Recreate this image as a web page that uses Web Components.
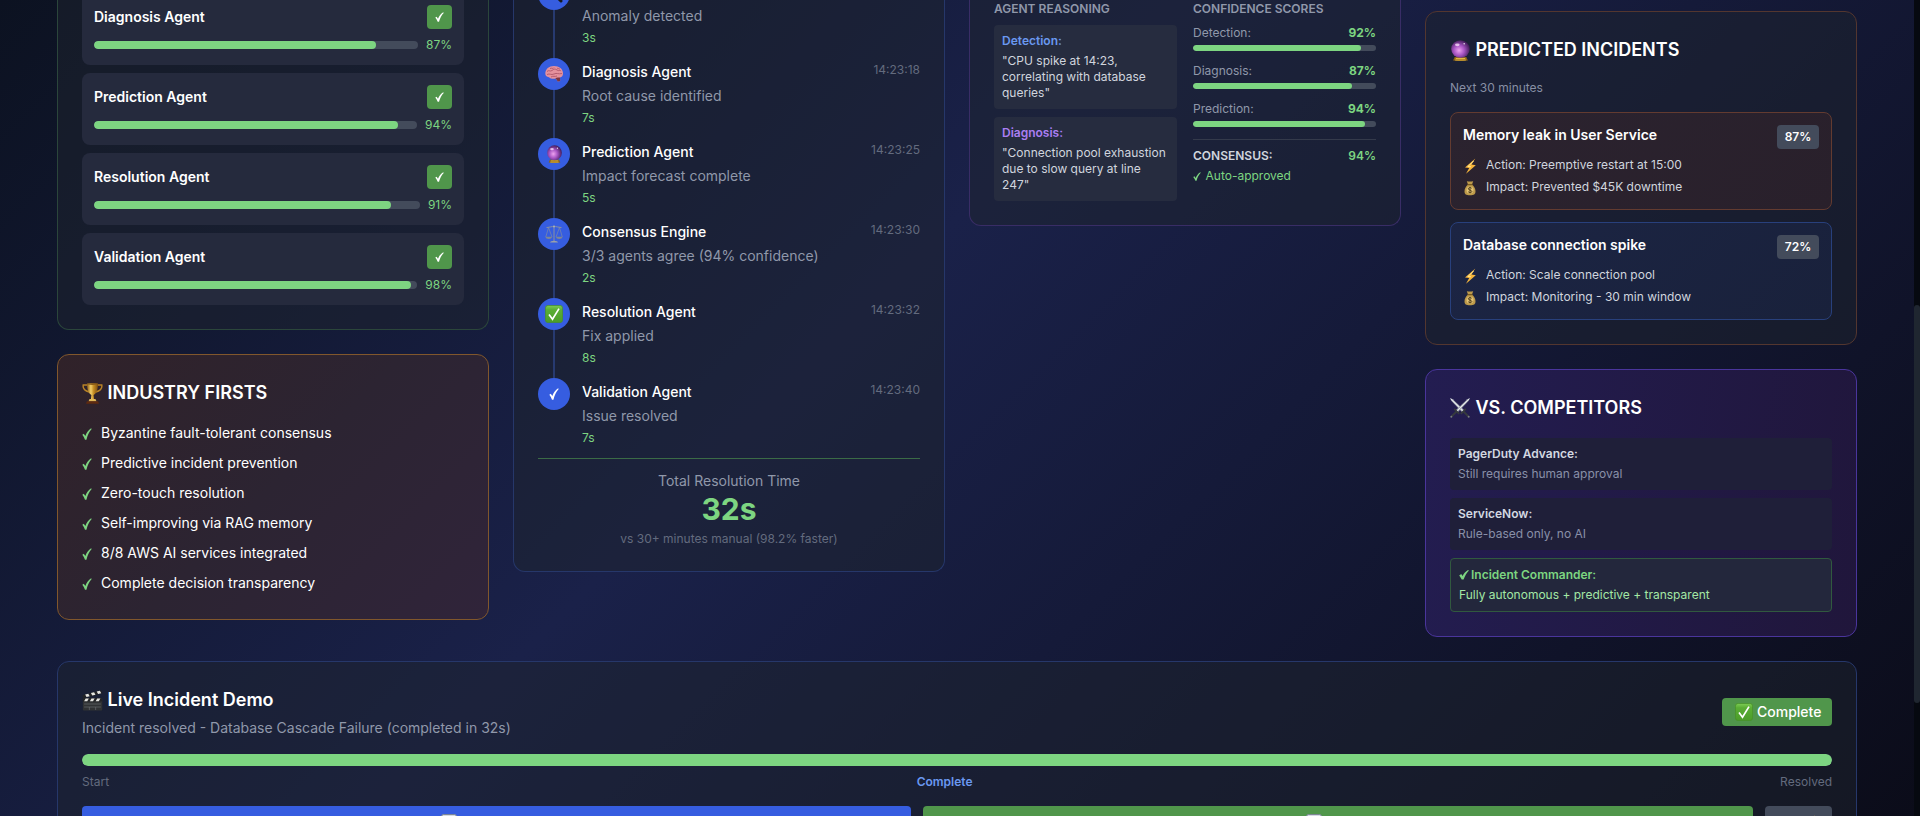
<!DOCTYPE html>
<html lang="en">
<head>
<meta charset="utf-8">
<title>Incident Commander</title>
<style>
html,body{margin:0;height:100%;overflow:hidden;background:#0a0b18}
body{font-family:Inter,"Liberation Sans",sans-serif;font-size:14px;line-height:20px;color:#fff}
</style>
</head>
<body>
<incident-dashboard></incident-dashboard>
<script>
const ICONS = {
  check: ['0 0 9 10', '<path fill="currentColor" d="M.3 5.6 1.6 4.7 3 6.7C4.2 3.8 5.8 1.6 8.2.2l.5.7C6.4 3.3 5 6 4 9.8H2.7C2.1 8.2 1.3 6.8.3 5.6Z"/>'],
  heavy: ['0 0 10 10', '<path fill="currentColor" d="M.2 5.4 2.2 4 3.6 6C5 3.4 6.600 1.500 9 .1l.9.5C7.500 3.200 6 5.900 4.600 9.600H2.700C2 8 1.200 6.500.2 5.400Z"/>'],
  trophy: ['0 0 21 21', '<defs><linearGradient id="g"><stop offset="0" stop-color="#8a5a12"/><stop offset=".35" stop-color="#f3cf6a"/><stop offset=".6" stop-color="#c48d24"/><stop offset="1" stop-color="#7c4c0e"/></linearGradient></defs><path d="M5.500 2H1.200c-.6 3.500 2.300 6 6 7M15.500 2h4.300c.6 3.500-2.300 6-6 7" fill="none" stroke="#b98326" stroke-width="1.400"/><path d="M5 .5h11c0 6-1.500 10-4.400 11.500l.5 4.500H8.900l.5-4.500C6.500 10.500 5 6.500 5 .5Z" fill="url(#g)"/><ellipse cx="10.500" cy="1.100" rx="5.500" ry=".8" fill="#8a5c17"/><path d="M7.500 16h6l1 2.500h-8z" fill="#e0b95a"/><path d="M5 18.300h11l1 2.400H4z" fill="#5e2a10"/>'],
  brain: ['0 0 18 18', '<path d="M.3 8.500C.3 4 4 1 9 1c5.200 0 9 3 9 7.400 0 2.400-1.200 3.600-3 4.100l.2 3.500-2.400.500-2-3C8 14.300 5.600 13.600 4 12.200 1.500 12 .3 10.600.3 8.500Z" fill="#e5919d"/><path d="M2 6.500c2-2 3 .500 5-1s3-2 5-.500 3-.500 4 1M2 9.500c3-1.500 4 1 7-.500s4 .5 8-.500M5 3.500c2-1 3 1 4-1M6 12c2-1.500 4 0 6-1M12 3c1 1 2 0 3 1.500" fill="none" stroke="#a94f63" stroke-width=".8"/><path d="M10.500 13c1.500-1 3-.5 4.500-.5l.2 3.500-2.400.5Z" fill="#7c3540"/>'],
  ball: ['0 0 18 21', '<defs><radialGradient id="b" cx=".42" cy=".58" r=".62"><stop offset="0" stop-color="#eda2f0"/><stop offset=".45" stop-color="#a855c4"/><stop offset="1" stop-color="#38184f"/></radialGradient></defs><path d="M3.500 17h11l1.500 3.500q-7 1.100-14 0Z" fill="#8d6316"/><path d="M4.500 18.500h9M4 20h10" stroke="#e6bd48" stroke-width=".9"/><circle cx="9" cy="9" r="8.800" fill="url(#b)"/><ellipse cx="6" cy="4.800" rx="2.200" ry="1.400" fill="#f5dcf7" opacity=".8"/><circle cx="12.500" cy="3.800" r=".8" fill="#fff" opacity=".8"/>'],
  scales: ['0 0 18 18', '<g fill="none" stroke="#8a929e" stroke-width="1"><path d="M1.500 2.600C5 2 7 1.800 9 1.200c2 .6 4 .8 7.500 1.400M9 1v15"/><path stroke-width=".6" d="M3.500 2.500.8 12M3.500 2.500 7 12M14.500 2.500 11 12M14.500 2.500 17.300 12"/></g><path d="M.3 11.700h7q-.6 2.300-3.500 2.300T.3 11.700ZM10.700 11.700h7q-.6 2.300-3.500 2.300t-3.500-2.300Z" fill="#7e8794"/><path d="M5 17.600q.5-1.800 4-1.800t4 1.800Z" fill="#9aa1aa"/><circle cx="9" cy="1.500" r="1" fill="#a9afb8"/>'],
  checkbox: ['0 0 18 18', '<defs><linearGradient id="k" x2="0" y2="1"><stop offset="0" stop-color="#7fce56"/><stop offset=".25" stop-color="#5aae35"/><stop offset="1" stop-color="#4b9c29"/></linearGradient></defs><rect x=".4" y=".4" width="17.200" height="17.200" rx="2.800" fill="url(#k)" stroke="#47902a" stroke-width=".8"/><path d="M4 9.500 7.500 14.200 14 3.600" fill="none" stroke="#fff" stroke-width="1.700"/>'],
  swords: ['0 0 20 20', '<g><path d="M.3.7.7.3 2.700 1.300 14.500 12.500 12.500 14.500 1.300 2.700Z" fill="#b9bec5"/><path d="M.7.700 13.500 13.500" stroke="#eef0f3" stroke-width=".8"/><path d="M15.800 10.800 10.800 15.800M13.500 13.500 18.500 18.500" stroke="#363a3e" stroke-width="1.800"/><circle cx="18.700" cy="18.700" r="1" fill="#777b7f"/></g><g transform="matrix(-1 0 0 1 20 0)"><path d="M.3.7.7.3 2.700 1.300 14.500 12.500 12.500 14.500 1.300 2.700Z" fill="#aab0b8"/><path d="M.7.700 13.500 13.500" stroke="#f5f6f8" stroke-width=".8"/><path d="M15.800 10.800 10.800 15.800M13.500 13.500 18.500 18.500" stroke="#363a3e" stroke-width="1.800"/><circle cx="18.700" cy="18.700" r="1" fill="#777b7f"/></g>'],
  clapper: ['0 0 20 21', '<rect x=".8" y="8" width="18.500" height="12.500" rx="1" fill="#303234"/><path d="M.8 8.300h18.500v3.200H.8zM.3 5.200 18.300.3l.9 3L1.200 8.200Z" fill="#232426"/><path d="m3 4.500 3-.8 1.300 2.600-3 .8ZM8.500 3l3-.8 1.300 2.600-3 .8ZM14 1.500l3-.8 1.300 2.600-3 .8ZM3.500 8.500h3l-1.500 2.700H2ZM9 8.500h3l-1.500 2.700h-3ZM14.500 8.500h3L16 11.200h-3Z" fill="#e6e6e2"/><path d="M2 14h16M2 17h16M7 17v3M13 17v3" stroke="#66696c" stroke-width=".7"/>'],
  bolt: ['0 0 14 18', '<path d="M12.300 1.500 2 10.500l4.200.4L3 16.800l9.800-8.600-4.300-.6Z" fill="#f6b53c"/><path d="M10.500 4 5 9.500l3 .3" fill="none" stroke="#ffe78f" stroke-width="1"/>'],
  bag: ['0 0 14 18', '<path d="M5 5.500 3.800 2.200Q7 3 10.200 2.200L9 5.500c2.200 2 3.500 4.300 3.500 6.700 0 3-1.500 4-5.500 4s-5.500-1-5.500-4C1.500 9.800 2.800 7.500 5 5.500Z" fill="#bd9a4a"/><path d="M4.300 5.700h5.400" stroke="#6b4e17" stroke-width="1"/><circle cx="7" cy="11" r="3.500" fill="#e1c273"/><path d="M8.700 9.300C8 8.300 5.300 8.300 5.300 9.800S8.800 11 8.800 12.500 6 13.800 5.200 12.700M7 7.800v6.500" fill="none" stroke="#473615" stroke-width=".9"/>'],
  lens: ['0 0 18 18', '<circle cx="7" cy="7" r="5.500" fill="#a8cbe0" stroke="#333" stroke-width="1.500"/><path d="m11 11 5 5" stroke="#17191c" stroke-width="3" stroke-linecap="round"/>'],
  screen: ['0 0 16 16', '<rect x=".5" y=".5" width="15" height="15" rx="2" fill="#d4d9e2" stroke="#7d8694"/>'],
};

function define(name, css, html) {
  customElements.define(name, class extends HTMLElement {
    connectedCallback() {
      if (this.shadowRoot) return;
      const a = k => this.getAttribute(k) || '';
      this.attachShadow({mode: 'open'}).innerHTML =
        '<style>*{box-sizing:border-box}' + css + '</style>' + html(a);
    }
  });
}

define('ui-icon', ':host{display:block;flex:none}svg{display:block;width:100%;height:100%}',
  a => { const [v, p] = ICONS[a('name')]; return `<svg viewBox="${v}" preserveAspectRatio="none">${p}</svg>`; });

define('ui-panel', `:host{display:block;box-sizing:border-box;border:1px solid var(--line);border-radius:12px;padding:24px;
  background:var(--fill,rgba(30,36,45,.5))}`, () => '<slot></slot>');

define('panel-title', `:host{display:flex;align-items:center;gap:4.500px;height:28px;font-size:18px;line-height:28px;font-weight:600;color:#fff}
  ui-icon{width:21px;height:21px}ui-icon[name=ball]{width:19px;margin:0 1px}ui-icon[name=swords]{width:20px;height:20px;margin-right:1px}`, a => `<ui-icon name="${a('icon')}"></ui-icon><slot></slot>`);

define('progress-bar', `:host{display:block;height:8px;border-radius:99px;background:#434b5b;overflow:hidden}
  i{display:block;height:100%;border-radius:99px;background:#7dd581}`, a => `<i style="width:${a('value')}%"></i>`);

define('agent-card', `:host{display:block;box-sizing:border-box;height:72px;padding:12px;border-radius:8px;background:#252a3d}
  div{display:flex;align-items:center}
  .top{height:24px;justify-content:space-between;font-weight:600}
  .badge{width:25px;height:24px;border-radius:4px;background:#50964b;justify-content:center}
  .badge ui-icon{width:9px;height:10px;margin-bottom:1px}
  .row{margin-top:8px;height:16px;gap:8px;font-size:12px;line-height:16px;color:#7dd581}
  progress-bar{flex:1}`,
  a => `<div class="top"><span>${a('name')}</span><div class="badge"><ui-icon name="check"></ui-icon></div></div>
  <div class="row"><progress-bar value="${a('value')}"></progress-bar><span>${a('value')}%</span></div>`);

define('check-item', `:host{display:flex;height:22px;gap:9px;line-height:20px;align-items:flex-start;color:#fff}
  ui-icon{width:10px;height:12px;margin-top:5px;color:#7dd581}`,
  () => '<ui-icon name="check"></ui-icon><span><slot></slot></span>');

define('timeline-step', `:host{display:flex;height:80px;gap:12px}
  :host([last]){height:68px}:host([last]) .rail::after{display:none}
  .rail{display:flex;flex-direction:column;align-items:center;width:32px}
  .rail::after{content:"";width:2px;flex:1;background:#273a70}
  .dot{width:32px;height:32px;border-radius:50%;background:#365de0;display:flex;align-items:center;justify-content:center}
  ui-icon{width:18px;height:18px}ui-icon[name=ball]{width:15px;height:18px}ui-icon[name=check]{width:10px;height:12px}
  .body{flex:1;padding-top:4px}
  .head{display:flex;justify-content:space-between;height:24px;font-weight:500}
  time,.dur{font-size:12px;line-height:16px;font-weight:400}
  time{color:#636b7e}.text{color:#9098aa;height:20px}.dur{color:#7dd581;margin-top:4px}`,
  a => `<div class="rail"><div class="dot"><ui-icon name="${a('icon')}"></ui-icon></div></div>
  <div class="body"><div class="head"><span>${a('name')}</span><time>${a('time')}</time></div>
  <div class="text">${a('text')}</div><div class="dur">${a('dur')}</div></div>`);

define('reason-note', `:host{display:block;height:84px;box-sizing:border-box;padding:8px;border-radius:4px;background:#262c3f;font-size:12px;line-height:16px;color:#d0d5de}
  b{display:block;font-weight:600;margin-bottom:4px;color:var(--c)}`,
  a => `<b>${a('label')}</b><slot></slot>`);

define('score-row', `:host{display:block;height:26px;margin-bottom:12px;font-size:12px;line-height:16px;color:#9098aa}
  div{display:flex;justify-content:space-between}b{font-weight:700;color:#7dd581}progress-bar{height:6px;margin-top:4px}`,
  a => `<div><span>${a('label')}</span><b>${a('value')}%</b></div><progress-bar value="${a('value')}"></progress-bar>`);

define('incident-card', `:host{display:block;box-sizing:border-box;height:98px;padding:12px;border:1px solid var(--line);border-radius:8px;background:var(--fill)}
  .top{display:flex;justify-content:space-between;height:24px;font-weight:600;margin-bottom:8px}
  .pct{width:42px;height:24px;line-height:24px;text-align:center;border-radius:4px;background:#434b5b;font-size:12px}
  .row{display:flex;gap:9px;height:18px;margin-bottom:4px;font-size:12px;line-height:16px;color:#d0d5de}
  ui-icon{width:14px;height:18px}`,
  a => `<div class="top"><span>${a('name')}</span><span class="pct">${a('value')}%</span></div>
  <div class="row"><ui-icon name="bolt"></ui-icon><span>Action: ${a('action')}</span></div>
  <div class="row"><ui-icon name="bag"></ui-icon><span>Impact: ${a('impact')}</span></div>`);

define('rival-card', `:host{display:block;box-sizing:border-box;padding:8px;border-radius:4px;background:#1f1f39;font-size:12px;line-height:16px;color:#8990a8}
  b{display:flex;gap:2px;align-items:center;font-weight:600;margin-bottom:4px;color:#d3d8e1}
  ui-icon{width:10px;height:10px}
  :host([own]){background:#23273c;border:1px solid #31593f;color:#a3e8a5}:host([own]) b{color:#7dd581}`,
  a => `<b>${a('icon') ? `<ui-icon name="${a('icon')}"></ui-icon>` : ''}${a('name')}</b><slot></slot>`);

define('incident-dashboard', `
  :host{display:flex;height:816px;overflow:hidden;background:linear-gradient(135deg,#0c1221 0%,#1a2149 43%,#0b0c19 100%)}
  .page{width:1800px;margin:-40px 57px 0}
  .grid{display:grid;grid-template-columns:repeat(4,432px);gap:24px;height:677px}
  .col{display:flex;flex-direction:column;gap:24px}
  .cut{border-top:0;border-radius:0 0 12px 12px}
  .stack{display:flex;flex-direction:column;gap:12px}
  .total{border-top:1px solid #3b6b46;text-align:center;padding-top:12px;height:89px;box-sizing:border-box;color:#9098aa}
  .total strong{display:block;font-size:30px;line-height:36px;color:#7dd581}
  .total small{display:block;margin-top:4px;font-size:12px;line-height:16px;color:#636b7e}
  .two{display:grid;grid-template-columns:1fr 1fr;gap:16px}
  h4{margin:0 0 8px;font-size:12px;line-height:16px;font-weight:600;color:#9098aa}
  .sum{border-top:1px solid #343a4b;padding-top:8px;font-size:12px;line-height:16px}
  .sum div{display:flex;justify-content:space-between;font-weight:600;color:#d0d5de}
  .sum b{font-weight:600}
  .sum b,.sum p{color:#7dd581}.sum p{display:flex;align-items:center;gap:4.500px;margin:4px 0 0}
  .sum ui-icon{width:8px;height:9px}
  .next{margin:16px 0;font-size:12px;line-height:16px;color:#878fa4}
  .demo{margin-top:24px;height:260px}
  .head{display:flex;justify-content:space-between;align-items:center;height:52px;margin-bottom:16px}
  .sub{margin-top:4px;color:#9098aa}
  .done{display:flex;align-items:center;gap:4px;width:110px;height:28px;padding-left:13px;box-sizing:border-box;border-radius:4px;background:#50964b;font-weight:500}
  .done ui-icon{width:18px;height:18px}
  .labels{display:flex;justify-content:space-between;margin:8px 0 16px;font-size:12px;line-height:16px;color:#636b7e}
  .labels b{font-weight:600;color:#6a98f0}
  .buttons{display:grid;grid-template-columns:829px 830px 67px;gap:12px}
  .buttons div{height:40px;padding:8px 0 0;box-sizing:border-box;border-radius:4px}
  .buttons ui-icon{width:16px;height:16px}
  .scroll{width:6px;background:#060910}
  .scroll i{display:block;height:398px;margin-top:305px;border-radius:3px;background:#1f2630}
`, () => `
<div class="page">
  <div class="grid">
    <div class="col">
      <ui-panel class="cut" style="--line:#2b463b;padding-top:33px">
        <div class="stack" style="gap:8px">
          <agent-card name="Diagnosis Agent" value="87"></agent-card>
          <agent-card name="Prediction Agent" value="94"></agent-card>
          <agent-card name="Resolution Agent" value="91"></agent-card>
          <agent-card name="Validation Agent" value="98"></agent-card>
        </div>
      </ui-panel>
      <ui-panel style="--line:#81572c;--fill:linear-gradient(135deg,#302229,#2c2432 50%,#30243a)">
        <panel-title icon="trophy">INDUSTRY FIRSTS</panel-title>
        <div class="stack" style="gap:8px;margin-top:16px">
          <check-item>Byzantine fault-tolerant consensus</check-item>
          <check-item>Predictive incident prevention</check-item>
          <check-item>Zero-touch resolution</check-item>
          <check-item>Self-improving via RAG memory</check-item>
          <check-item>8/8 AWS AI services integrated</check-item>
          <check-item>Complete decision transparency</check-item>
        </div>
      </ui-panel>
    </div>
    <div class="col">
      <ui-panel class="cut" style="--line:#26376a;padding-top:18px">
        <timeline-step icon="lens" text="Anomaly detected" dur="3s"></timeline-step>
        <timeline-step icon="brain" name="Diagnosis Agent" time="14:23:18" text="Root cause identified" dur="7s"></timeline-step>
        <timeline-step icon="ball" name="Prediction Agent" time="14:23:25" text="Impact forecast complete" dur="5s"></timeline-step>
        <timeline-step icon="scales" name="Consensus Engine" time="14:23:30" text="3/3 agents agree (94% confidence)" dur="2s"></timeline-step>
        <timeline-step icon="checkbox" name="Resolution Agent" time="14:23:32" text="Fix applied" dur="8s"></timeline-step>
        <timeline-step last icon="check" name="Validation Agent" time="14:23:40" text="Issue resolved" dur="7s"></timeline-step>
        <div class="total" style="margin-top:12px">Total Resolution Time<strong>32s</strong><small>vs 30+ minutes manual (98.2% faster)</small></div>
      </ui-panel>
    </div>
    <div class="col">
      <ui-panel class="cut" style="--line:#392d66;padding-top:41px">
        <div class="two">
          <div><h4>AGENT REASONING</h4>
            <div class="stack" style="gap:8px">
              <reason-note label="Detection:" style="--c:#6a98f0">"CPU spike at 14:23, correlating with database queries"</reason-note>
              <reason-note label="Diagnosis:" style="--c:#aa7ef2">"Connection pool exhaustion due to slow query at line 247"</reason-note>
            </div>
          </div>
          <div><h4>CONFIDENCE SCORES</h4>
            <score-row label="Detection:" value="92"></score-row>
            <score-row label="Diagnosis:" value="87"></score-row>
            <score-row label="Prediction:" value="94"></score-row>
            <div class="sum"><div>CONSENSUS:<b>94%</b></div><p><ui-icon name="check"></ui-icon>Auto-approved</p></div>
          </div>
        </div>
      </ui-panel>
    </div>
    <div class="col" style="padding-top:51px">
      <ui-panel style="--line:#53362f">
        <panel-title icon="ball">PREDICTED INCIDENTS</panel-title>
        <p class="next">Next 30 minutes</p>
        <div class="stack">
          <incident-card name="Memory leak in User Service" value="87" action="Preemptive restart at 15:00" impact="Prevented $45K downtime" style="--line:#633b30;--fill:linear-gradient(135deg,#2b232f,#29202b)"></incident-card>
          <incident-card name="Database connection spike" value="72" action="Scale connection pool" impact="Monitoring - 30 min window" style="--line:#28407c;--fill:linear-gradient(135deg,#1c2544,#19213b)"></incident-card>
        </div>
      </ui-panel>
      <ui-panel style="--line:#4a359c;--fill:linear-gradient(100deg,#231d51,#20163b)">
        <panel-title icon="swords">VS. COMPETITORS</panel-title>
        <div class="stack" style="gap:8px;margin-top:16px">
          <rival-card name="PagerDuty Advance:">Still requires human approval</rival-card>
          <rival-card name="ServiceNow:">Rule-based only, no AI</rival-card>
          <rival-card own icon="heavy" name="Incident Commander:">Fully autonomous + predictive + transparent</rival-card>
        </div>
      </ui-panel>
    </div>
  </div>
  <ui-panel class="demo" style="--line:#26376a">
    <div class="head">
      <div><panel-title icon="clapper">Live Incident Demo</panel-title><div class="sub">Incident resolved - Database Cascade Failure (completed in 32s)</div></div>
      <div class="done"><ui-icon name="checkbox"></ui-icon>Complete</div>
    </div>
    <progress-bar value="100" style="height:12px"></progress-bar>
    <div class="labels"><span>Start</span><b>Complete</b><span>Resolved</span></div>
    <div class="buttons">
      <div style="background:#365de0;padding-left:359px"><ui-icon name="screen"></ui-icon></div>
      <div style="background:#50964b;padding-left:383px"><ui-icon name="screen"></ui-icon></div>
      <div style="background:#434b5b;padding-left:36px"><ui-icon name="bolt"></ui-icon></div>
    </div>
  </ui-panel>
</div>
<div class="scroll"><i></i></div>`);
</script>
</body>
</html>
